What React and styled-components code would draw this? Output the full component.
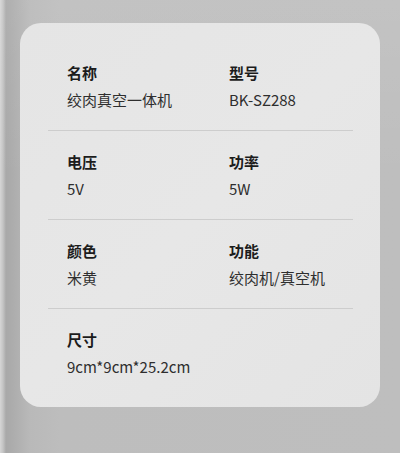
import React from "react";
import styled, { createGlobalStyle } from "styled-components";

const GlobalStyle = createGlobalStyle`
  html, body {
    margin: 0;
    padding: 0;
  }

  body {
    width: 400px;
    height: 453px;
    overflow: hidden;
    font-family: "Noto Sans CJK SC", "Noto Sans", sans-serif;
    background: linear-gradient(
      to right,
      #d6d6d6 0px,
      #c4c4c4 3px,
      #a9a9a9 6px,
      #acacac 12px,
      #b9b9b9 30px,
      #bdbdbd 60px,
      #bebebe 100%
    );
  }
`;

const Page = styled.div`
  box-sizing: border-box;
  width: 400px;
  height: 453px;
  padding: 23px 20px 0;
  background: linear-gradient(
    to bottom,
    rgba(255, 255, 255, 0.08) 0%,
    rgba(255, 255, 255, 0) 40%
  );
`;

const Card = styled.section`
  box-sizing: border-box;
  width: 360px;
  padding: 19px 27px 10px 28px;
  border-radius: 21px;
  background: linear-gradient(135deg, #e5e5e5 0%, #e7e7e7 50%, #e4e4e4 100%);
`;

const SpecRow = styled.div`
  display: grid;
  grid-template-columns: 162px 1fr;
  padding: 21px 0 20px 19px;
  border-bottom: ${({ $last }) => ($last ? "none" : "1px solid #cdcdcd")};
`;

const Spec = styled.div`
  display: flex;
  flex-direction: column;
  gap: 7px;
`;

const Label = styled.div`
  font-size: 15px;
  line-height: 20px;
  font-weight: 700;
  color: #1c1c1c;
`;

const Value = styled.div`
  font-size: 15px;
  line-height: 20px;
  font-weight: 400;
  color: #2e2e2e;
`;

const rows = [
  [
    { label: "名称", value: "绞肉真空一体机" },
    { label: "型号", value: "BK-SZ288" },
  ],
  [
    { label: "电压", value: "5V" },
    { label: "功率", value: "5W" },
  ],
  [
    { label: "颜色", value: "米黄" },
    { label: "功能", value: "绞肉机/真空机" },
  ],
  [{ label: "尺寸", value: "9cm*9cm*25.2cm" }],
];

const App = () => (
  <>
    <GlobalStyle />
    <Page>
      <Card>
        {rows.map((row, i) => (
          <SpecRow key={i} $last={i === rows.length - 1}>
            {row.map((spec) => (
              <Spec key={spec.label}>
                <Label>{spec.label}</Label>
                <Value>{spec.value}</Value>
              </Spec>
            ))}
          </SpecRow>
        ))}
      </Card>
    </Page>
  </>
);

export default App;
